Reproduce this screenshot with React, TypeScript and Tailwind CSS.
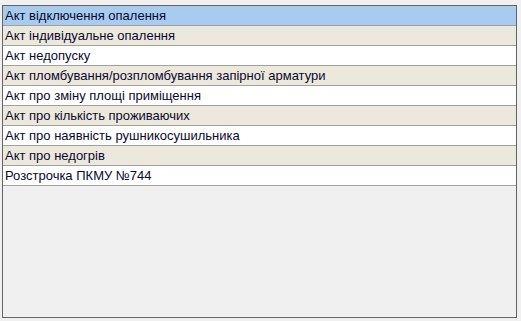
import React from "react";

const rows = [
  "Акт відключення опалення",
  "Акт індивідуальне опалення",
  "Акт недопуску",
  "Акт пломбування/розпломбування запірної арматури",
  "Акт про зміну площі приміщення",
  "Акт про кількість проживаючих",
  "Акт про наявність рушникосушильника",
  "Акт про недогрів",
  "Розстрочка ПКМУ №744",
];

export default function App() {
  return (
    <div
      className="w-[521px] h-[321px] bg-[#f0f0f0] pt-[5px] pl-[2px]"
      style={{ fontFamily: '"Liberation Sans", Arial, sans-serif' }}
    >
      <div className="w-[515px] h-[313px] border border-[#646464] bg-[#f0f0f0] flex flex-col">
        {rows.map((r, i) => (
          <div
            key={r}
            className={`h-[20px] border-b border-[#a0a0a0] pl-[2px] flex items-center text-[13px] leading-none text-[#0a0a30] ${
              i === 0 ? "bg-[#a8cbf0]" : i % 2 === 1 ? "bg-[#ece8dc]" : "bg-white"
            }`}
          >
            {r}
          </div>
        ))}
      </div>
    </div>
  );
}
